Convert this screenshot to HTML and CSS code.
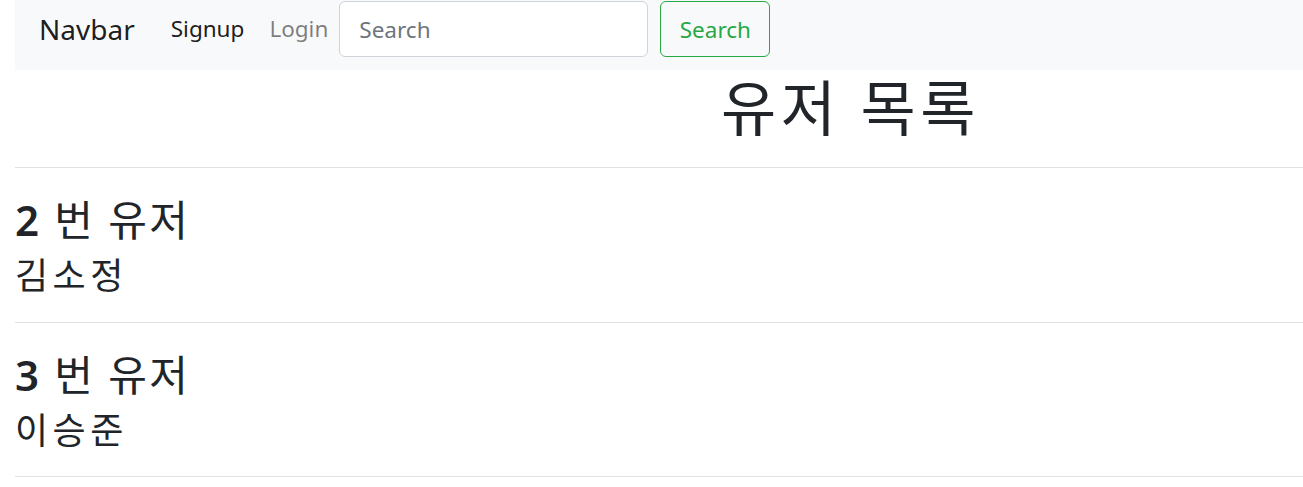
FILE: index.html
```html
<!DOCTYPE html>
<html lang="ko">
<head>
<meta charset="utf-8">
<title>유저 목록</title>
<link rel="stylesheet" href="styles.css">
</head>
<body>
<div class="page">
  <nav class="navbar">
    <a class="brand" href="#">Navbar</a>
    <a class="nav-link active" href="#">Signup</a>
    <a class="nav-link" href="#">Login</a>
    <form class="search-form">
      <input class="search-input" type="search" placeholder="Search">
      <button class="search-btn" type="button">Search</button>
    </form>
  </nav>
  <h1 class="title">유저 목록</h1>
  <div class="user">
    <h3 class="user-no"><span class="num">2</span> 번 유저</h3>
    <div class="user-name">김소정</div>
  </div>
  <div class="user last">
    <h3 class="user-no"><span class="num">3</span> 번 유저</h3>
    <div class="user-name">이승준</div>
  </div>
</div>
</body>
</html>
```
FILE: styles.css
```css
* { box-sizing: border-box; }
body {
  margin: 0;
  font-family: "Noto Sans", "Noto Sans CJK KR", sans-serif;
  color: #212529;
  background: #fff;
}
.page {
  padding-left: 15px;
  overflow: hidden;
}
.navbar {
  height: 70px;
  background: #f8f9fa;
  display: flex;
  align-items: center;
  padding: 0 0 12px 24px;
}
.brand {
  font-size: 28px;
  color: rgba(0,0,0,.9);
  text-decoration: none;
  margin-right: 36px;
  line-height: 56px;
}
.nav-link {
  font-size: 22.5px;
  color: rgba(0,0,0,.5);
  text-decoration: none;
  margin-right: 25px;
  line-height: 56px;
}
.nav-link.active { color: rgba(0,0,0,.9); }
.nav-link:last-of-type { margin-right: 11px; }
.search-form {
  display: flex;
  gap: 12px;
}
.search-input {
  width: 309px;
  height: 56px;
  border: 1px solid #ced4da;
  border-radius: 6px;
  padding: 0 19px;
  font: inherit;
  font-size: 22.5px;
  color: #495057;
  background: #fff;
}
.search-input::placeholder { color: #6c757d; }
.search-btn {
  width: 110px;
  height: 56px;
  border: 1px solid #28a745;
  border-radius: 6px;
  background: transparent;
  color: #28a745;
  font: inherit;
  font-size: 22.5px;
  padding: 0;
}
.title {
  margin: 0;
  font-size: 60px;
  font-weight: 400;
  line-height: 76px;
  letter-spacing: 4.5px;
  padding: 0 0 21px 706px;
  border-bottom: 1px solid #e2e2e2;
}
.user {
  height: 155px;
  padding-top: 24px;
  border-bottom: 1px solid #e2e2e2;
}
.user.last { height: 154px; }
.user-no {
  margin: 0;
  font-size: 42px;
  font-weight: 400;
  line-height: 56px;
  letter-spacing: 2.2px;
}
.num { font-weight: 600; }
.user-name {
  font-size: 36px;
  line-height: 52px;
  padding-top: 2px;
  letter-spacing: 4.5px;
}
```
